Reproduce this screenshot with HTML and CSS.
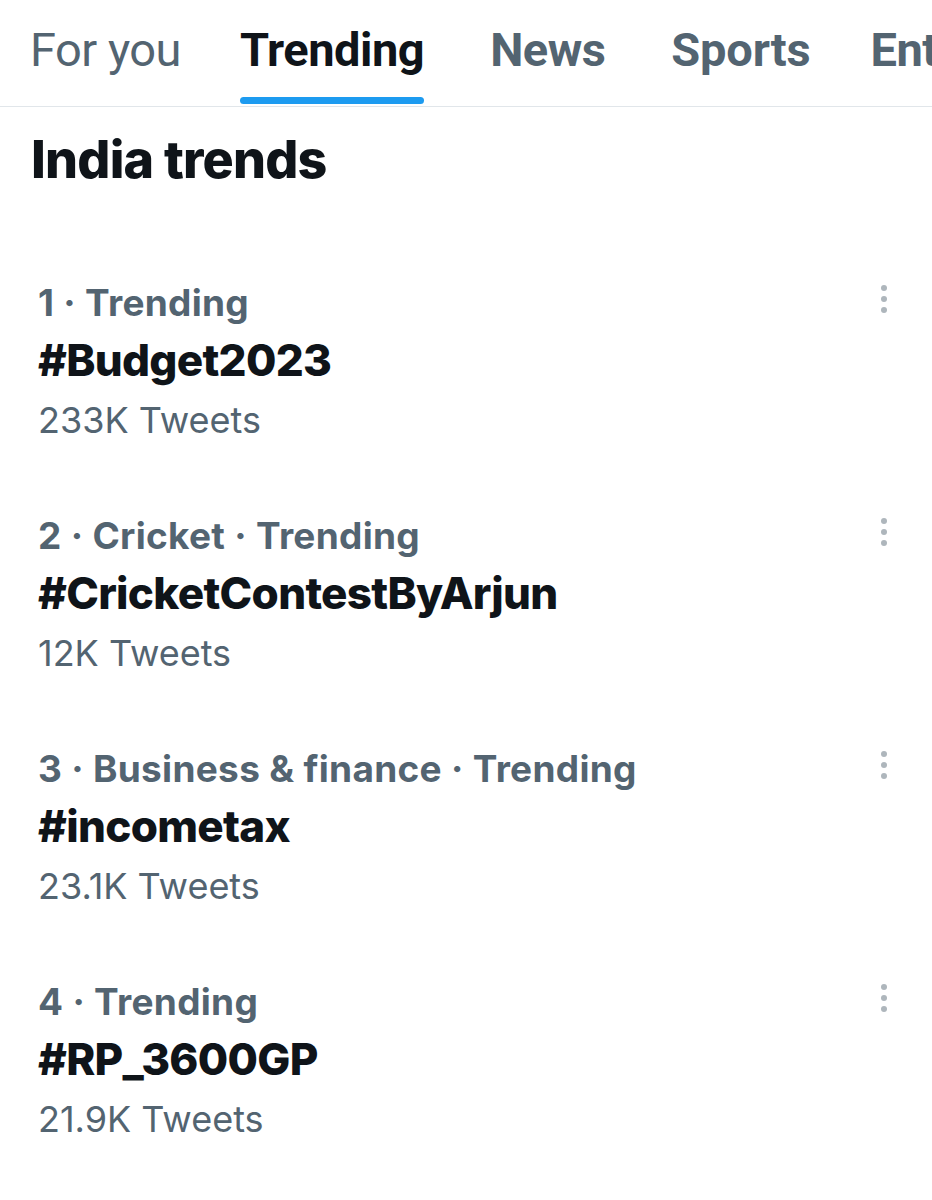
FILE: index.html
```html
<!DOCTYPE html>
<html lang="en">
<head>
<meta charset="utf-8">
<title>Explore - Trending</title>
<link rel="stylesheet" href="styles.css">
</head>
<body>
<nav class="tabs">
  <div class="tab"><span class="tab-label">For you</span></div>
  <div class="tab active"><span class="tab-label">Trending</span><span class="tab-bar"></span></div>
  <div class="tab news"><span class="tab-label">News</span></div>
  <div class="tab sports"><span class="tab-label">Sports</span></div>
  <div class="tab ent"><span class="tab-label">Entertainment</span></div>
</nav>
<main>
  <h1 class="heading">India trends</h1>
  <section class="trend">
    <div class="trend-text">
      <div class="meta">1 · Trending</div>
      <div class="tag">#Budget2023</div>
      <div class="count">233K Tweets</div>
    </div>
    <div class="more"><i></i><i></i><i></i></div>
  </section>
  <section class="trend">
    <div class="trend-text">
      <div class="meta">2 · Cricket · Trending</div>
      <div class="tag">#CricketContestByArjun</div>
      <div class="count">12K Tweets</div>
    </div>
    <div class="more"><i></i><i></i><i></i></div>
  </section>
  <section class="trend">
    <div class="trend-text">
      <div class="meta">3 · Business &amp; finance · Trending</div>
      <div class="tag">#incometax</div>
      <div class="count">23.1K Tweets</div>
    </div>
    <div class="more"><i></i><i></i><i></i></div>
  </section>
  <section class="trend">
    <div class="trend-text">
      <div class="meta">4 · Trending</div>
      <div class="tag">#RP_3600GP</div>
      <div class="count">21.9K Tweets</div>
    </div>
    <div class="more"><i></i><i></i><i></i></div>
  </section>
</main>
</body>
</html>
```
FILE: styles.css
```css
html, body {
  margin: 0;
  padding: 0;
  background: #ffffff;
}
body {
  font-family: Inter, "Noto Sans", sans-serif;
  color: #0f1419;
  overflow: hidden;
}
.tabs {
  display: flex;
  gap: 62px;
  padding-left: 30px;
  height: 106px;
  border-bottom: 1px solid #e1e6ea;
  overflow: hidden;
  white-space: nowrap;
}
.tab {
  display: flex;
  flex-direction: column;
  align-items: stretch;
  padding-top: 22px;
  font-family: Roboto, "Liberation Sans", sans-serif;
  font-size: 47px;
  line-height: 56px;
  font-weight: 700;
  color: #536471;
  letter-spacing: -0.5px;
}
.tab:first-child {
  font-weight: 400;
}
.tab.active {
  color: #0f1419;
  margin-left: -3px;
}
.tab.news {
  margin-left: 4px;
}
.tab.sports {
  margin-left: 4px;
  letter-spacing: -0.2px;
}
.tab.ent {
  margin-left: -2px;
}
.tab-bar {
  display: block;
  height: 7px;
  margin-top: 19px;
  border-radius: 4px;
  background: #1d9bf0;
}
.heading {
  margin: 23px 0 0 31px;
  font-size: 52px;
  line-height: 60px;
  font-weight: 800;
  letter-spacing: -0.8px;
}
.trend {
  display: flex;
  justify-content: space-between;
  align-items: flex-start;
  padding: 36px 38px 34px 38px;
}
.trend:first-of-type {
  margin-top: 55px;
}
.meta {
  font-size: 37px;
  line-height: 44px;
  font-weight: 700;
  color: #536471;
  letter-spacing: 0.3px;
}
.tag {
  font-size: 44px;
  line-height: 71px;
  font-weight: 800;
  letter-spacing: -0.7px;
}
.count {
  font-size: 36px;
  line-height: 48px;
  font-weight: 400;
  color: #536471;
}
.more {
  display: flex;
  flex-direction: column;
  gap: 5px;
  padding-top: 4px;
  margin-right: 7px;
}
.more i {
  display: block;
  width: 6px;
  height: 6px;
  border-radius: 50%;
  background: #aeb6bc;
}
```
